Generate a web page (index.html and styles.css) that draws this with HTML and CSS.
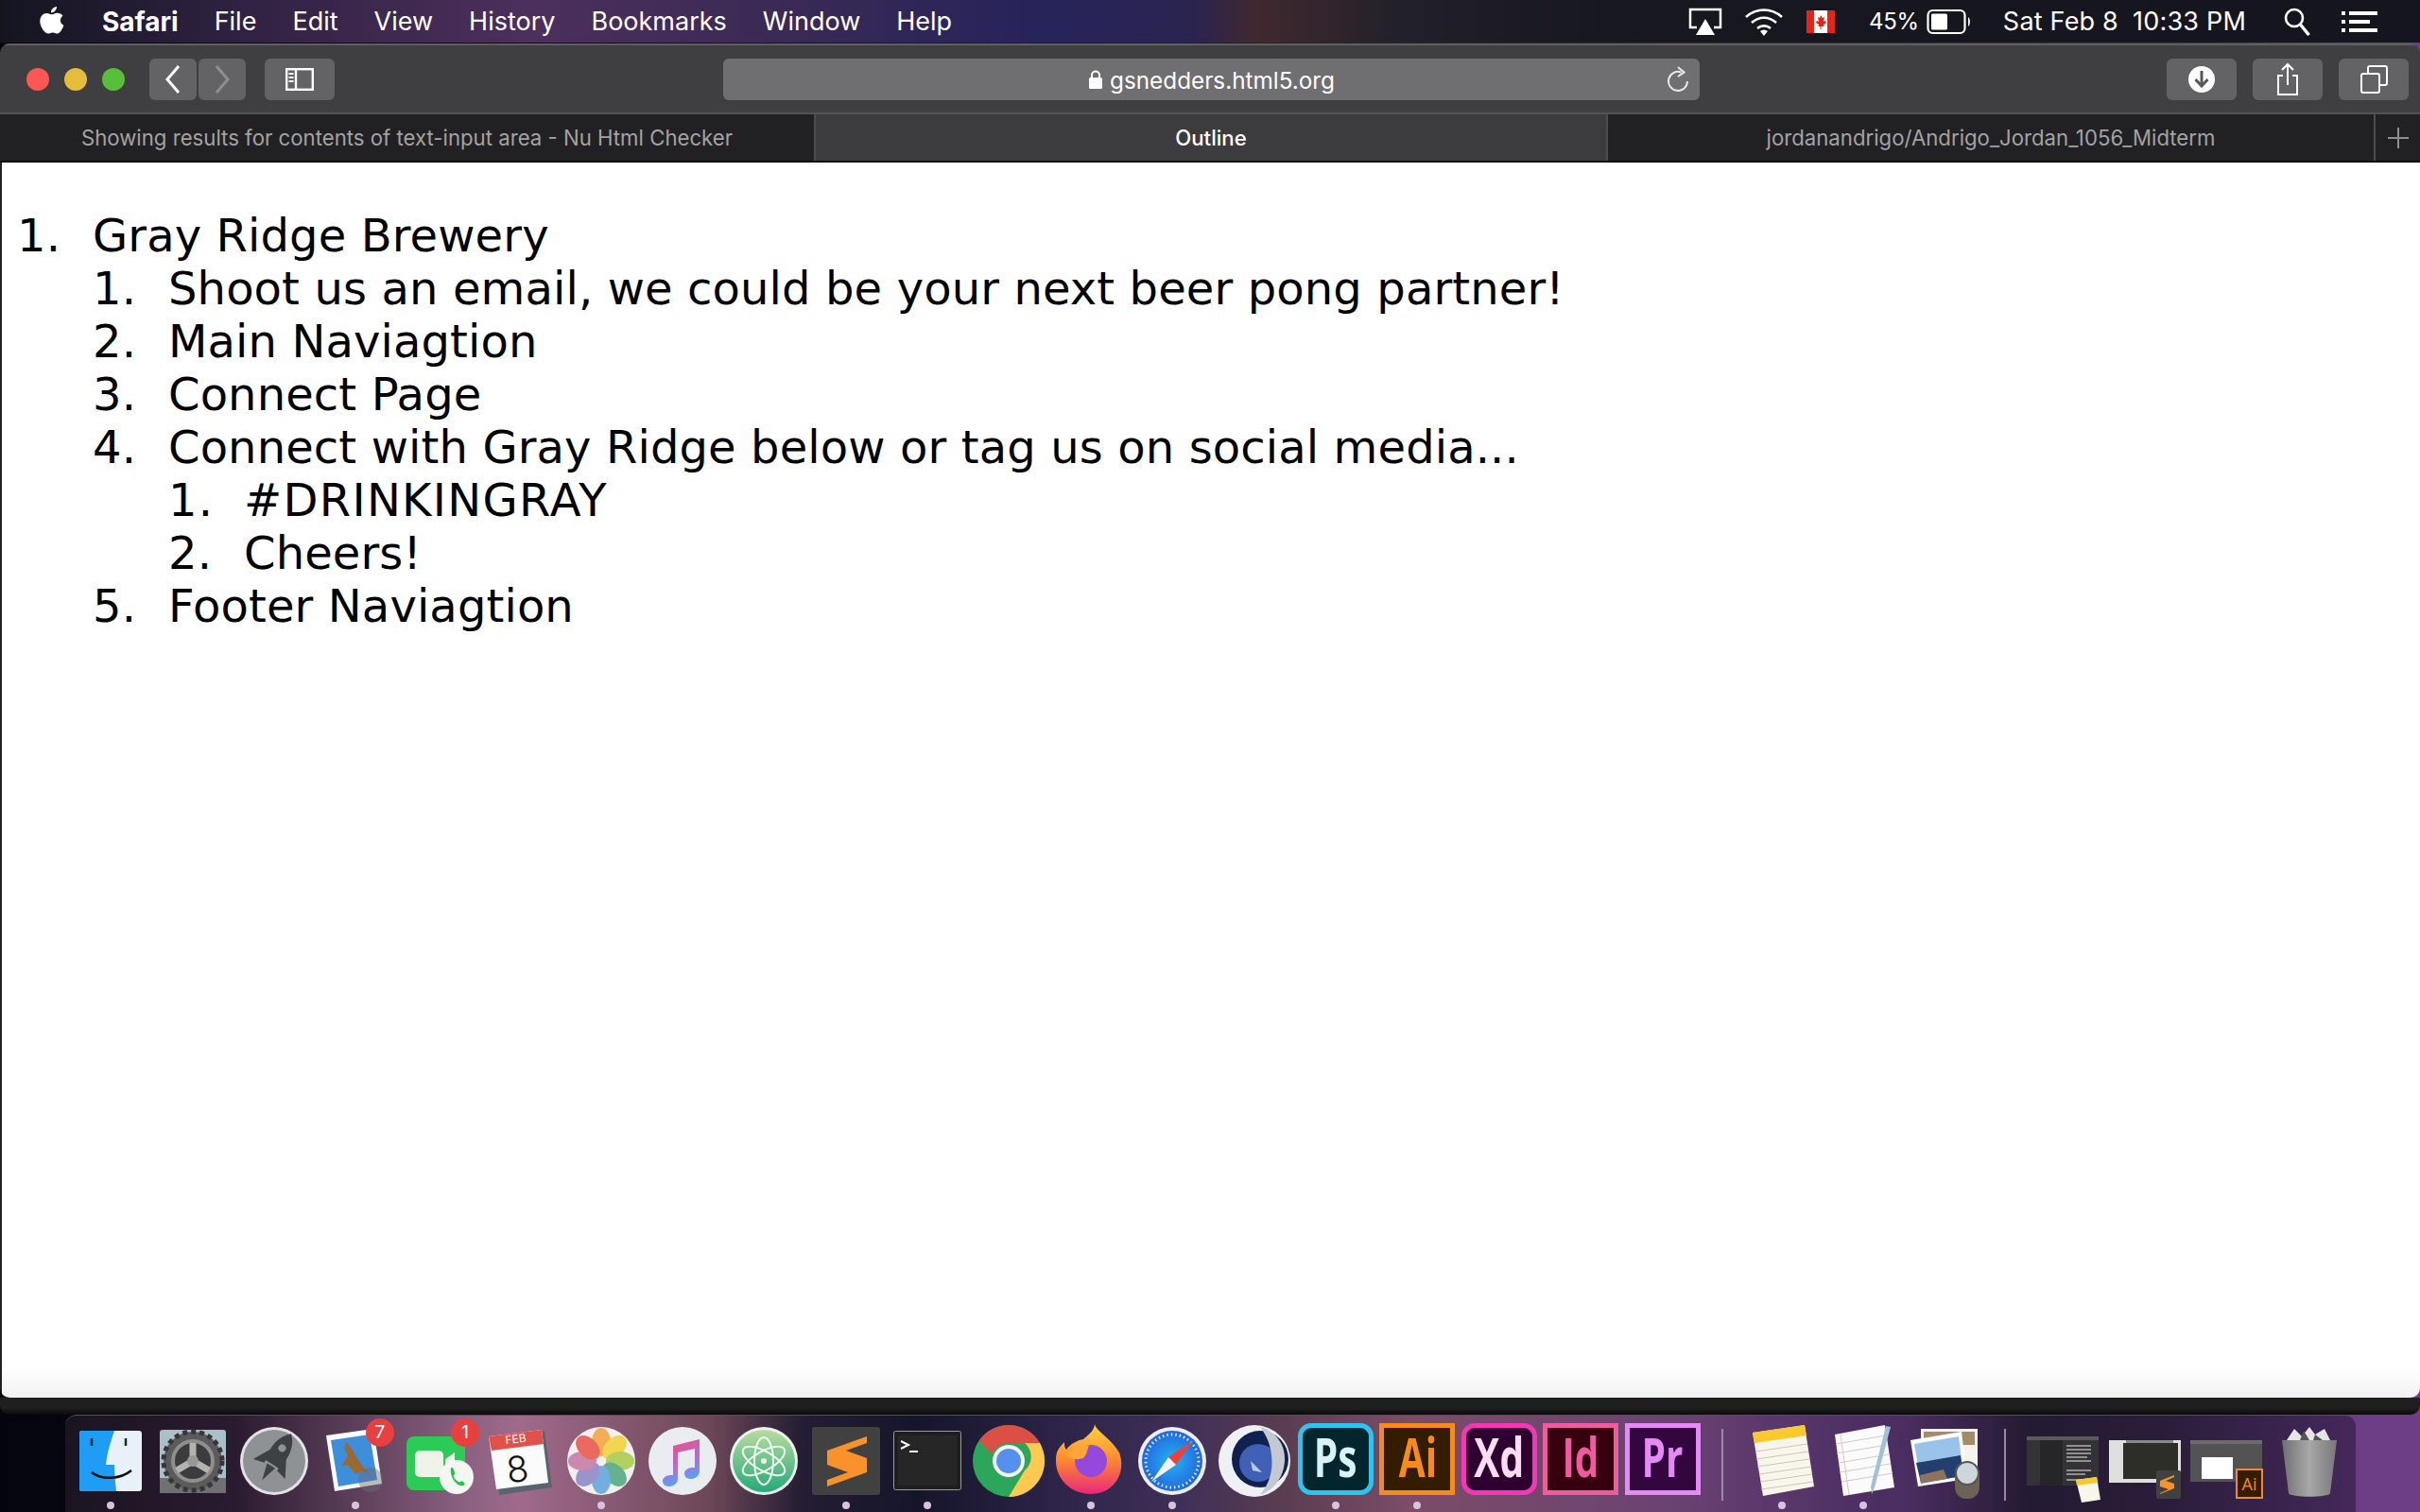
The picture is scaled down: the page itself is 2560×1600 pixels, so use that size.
FILE: index.html
```html
<!DOCTYPE html>
<html lang="en">
<head>
    <meta charset="UTF-8">
    <title>Outline</title>
    <link rel="stylesheet" href="styles.css">
</head>
<body>
    <!-- menu bar -->
    <header class="menubar">
        <svg class="apple" viewBox="0 0 26 32"><path d="M18 0c.3 3-2.600 6.600-6 6.400C11.600 3.300 14.800.3 18 0zM13 8.300c1.400 0 3.400-1.700 6-1.500 1.500.1 4 .7 5.500 3-3.800 2.600-3.300 8 .9 10-1 3-3.700 8.700-6.600 8.800-1.900.1-2.700-1.200-5-1.200s-3.200 1.200-5 1.200C5.500 28.700.3 21.500.3 15.600.3 10 3.900 7 7.300 6.900c2.300 0 4.200 1.400 5.700 1.400z"/></svg>
        <span class="menu-item app-name">Safari</span>
        <span class="menu-item">File</span>
        <span class="menu-item">Edit</span>
        <span class="menu-item">View</span>
        <span class="menu-item">History</span>
        <span class="menu-item">Bookmarks</span>
        <span class="menu-item">Window</span>
        <span class="menu-item">Help</span>
        <div class="status">
            <svg class="st-airplay" width="36" height="30" viewBox="0 0 36 30"><path d="M9 21H2V2h32v19h-7" fill="none" stroke="#fff" stroke-width="2.500"/><path d="M18 12l10 17H8z" fill="#fff"/></svg>
            <svg class="st-wifi" width="42" height="30" viewBox="0 0 42 30" fill="none" stroke="#fff" stroke-width="2.600"><path d="M2 10c11-10 27-10 38 0M8 16c8-7 18-7 26 0M14 22c4-3.500 10-3.500 14 0"/><path d="M21 30l-4-5c2.500-2 5.500-2 8 0z" fill="#fff" stroke="none"/></svg>
            <svg class="st-flag" width="30" height="30" viewBox="0 0 30 30"><rect y="3" width="30" height="24" fill="#fff"/><rect y="3" width="8" height="24" fill="#e1251b"/><rect x="22" y="3" width="8" height="24" fill="#e1251b"/><path d="M15 8l2 3 2-1-1 5 2-1 1 2-3 2 .5 2H15.500v3h-1v-3H12.500l.5-2-3-2 1-2 2 1-1-5 2 1z" fill="#e1251b"/></svg>
            <span class="st-text st-battery-text">45%</span>
            <svg class="st-battery" width="48" height="30" viewBox="0 0 48 30"><rect x="1.500" y="3" width="39" height="24" rx="5" fill="none" stroke="#fff" stroke-width="2.200"/><rect x="5" y="6.500" width="17" height="17" rx="1.500" fill="#fff"/><path d="M44 10c2.500 1 2.500 9 0 10z" fill="#fff"/></svg>
            <span class="st-text st-date">Sat Feb 8</span>
            <span class="st-text st-time">10:33 PM</span>
            <svg class="st-search" width="30" height="30" viewBox="0 0 30 30" fill="none" stroke="#fff"><circle cx="12" cy="11" r="9" stroke-width="2.600"/><path d="M18.500 18l9 11" stroke-width="3.400"/></svg>
            <svg class="st-list" width="38" height="24" viewBox="0 0 38 24" fill="#fff"><rect y="1" width="4" height="4"/><rect x="8" y="1" width="30" height="4"/><rect y="10" width="4" height="4"/><rect x="8" y="10" width="22" height="4"/><rect y="19" width="4" height="4"/><rect x="8" y="19" width="30" height="4"/></svg>
        </div>
    </header>

    <!-- safari window -->
    <main class="window">
        <div class="toolbar">
            <div class="lights">
                <span class="light red"></span>
                <span class="light yellow"></span>
                <span class="light green"></span>
            </div>
            <button class="tbtn nav-btn"><svg width="20" height="32" viewBox="0 0 20 32" fill="none" stroke="#fff" stroke-width="3"><path d="M16 2L4 16l12 14"/></svg></button>
            <button class="tbtn nav-btn next"><svg width="20" height="32" viewBox="0 0 20 32" fill="none" stroke="#8e8d8f" stroke-width="3"><path d="M4 2l12 14L4 30"/></svg></button>
            <button class="tbtn side-btn"><svg width="30" height="24" viewBox="0 0 30 24" fill="none" stroke="#fff" stroke-width="2.400"><rect x="1.200" y="1.200" width="27.600" height="21.600"/><path d="M11 1v22"/><path d="M3.500 6h5M3.500 10h5M3.500 14h5" stroke-width="2"/></svg></button>
            <div class="urlbar">
                <svg class="lock" width="16" height="22" viewBox="0 0 16 22"><path d="M4 10V6.500a4 4 0 0 1 8 0V10" fill="none" stroke="#fff" stroke-width="2"/><rect x="1" y="9" width="14" height="12" rx="1.500" fill="#fff"/></svg>
                <span class="url">gsnedders.html5.org</span>
                <svg class="reload" width="26" height="28" viewBox="0 0 26 28" fill="none" stroke="#e8e8e8" stroke-width="2"><path d="M16.500 6.500A10 10 0 1 0 23 16"/><path d="M13 1l6.500 5.500L13 11" /></svg>
            </div>
            <button class="tbtn tool-btn download"><svg width="30" height="30" viewBox="0 0 30 30"><circle cx="15" cy="15" r="14" fill="#fff"/><path d="M15 6v15M8.500 15l6.500 7 6.500-7" fill="none" stroke="#58575a" stroke-width="3"/></svg></button>
            <button class="tbtn tool-btn"><svg width="26" height="36" viewBox="0 0 26 36" fill="none" stroke="#fff" stroke-width="2"><path d="M8 14H3v20h20V14h-5"/><path d="M13 24V2M7 8l6-6 6 6"/></svg></button>
            <button class="tbtn tool-btn"><svg width="30" height="30" viewBox="0 0 30 30" fill="none" stroke="#fff" stroke-width="2"><rect x="2" y="9" width="19" height="20" rx="2"/><path d="M9 9V3a2 2 0 0 1 2-2h16a2 2 0 0 1 2 2v16a2 2 0 0 1-2 2h-6"/></svg></button>
        </div>
        <nav class="tabs">
            <div class="tab tab-first">Showing results for contents of text-input area - Nu Html Checker</div>
            <div class="tab tab-active">Outline</div>
            <div class="tab tab-last">jordanandrigo/Andrigo_Jordan_1056_Midterm</div>
            <div class="tab tab-new"><svg width="22" height="22" viewBox="0 0 22 22" stroke="#8f8f8f" stroke-width="2"><path d="M11 0v22M0 11h22"/></svg></div>
        </nav>
        <section class="page">
            <ol class="outline">
                <li><span class="num">1.</span>Gray Ridge Brewery
                    <ol class="outline">
                        <li><span class="num">1.</span>Shoot us an email, we could be your next beer pong partner!</li>
                        <li><span class="num">2.</span>Main Naviagtion</li>
                        <li><span class="num">3.</span>Connect Page</li>
                        <li><span class="num">4.</span>Connect with Gray Ridge below or tag us on social media...
                            <ol class="outline">
                                <li class="caps"><span class="num">1.</span>#DRINKINGRAY</li>
                                <li><span class="num">2.</span>Cheers!</li>
                            </ol>
                        </li>
                        <li><span class="num">5.</span>Footer Naviagtion</li>
                    </ol>
                </li>
            </ol>
        </section>
    </main>
    <div class="back-window"></div>

    <!-- dock -->
    <footer class="dock">
        <div class="dock-item running">
            <svg viewBox="0 0 80 80"><rect x="7" y="8" width="66" height="64" rx="3" fill="#e8f0f8"/><path d="M10 8h34c-4 12-8 24-9 36h9c0 10 1 19 2 28H10a3 3 0 0 1-3-3V11a3 3 0 0 1 3-3z" fill="#1f9cf3"/><path d="M20 16v8M56 16v8" stroke="#1a2a3a" stroke-width="2.500"/><path d="M20 52c10 8 30 8 42-2" fill="none" stroke="#111" stroke-width="2.500"/></svg>
        </div>
        <div class="dock-item">
            <svg viewBox="0 0 80 80"><rect x="5" y="7" width="70" height="67" rx="3" fill="#a9c0c9"/><rect x="5" y="58" width="70" height="16" fill="#6f7072"/><circle cx="40" cy="40" r="31" fill="#5b5b5c"/><circle cx="40" cy="40" r="31" fill="none" stroke="#35353a" stroke-width="5" stroke-dasharray="5 4"/><circle cx="40" cy="40" r="21" fill="#3c3c3e" stroke="#8f8f8f" stroke-width="4"/><path d="M40 40V21M40 40L23 50M40 40l17 10" stroke="#b5b3ad" stroke-width="7"/><circle cx="40" cy="40" r="6" fill="#999"/></svg>
        </div>
        <div class="dock-item">
            <svg viewBox="0 0 80 80"><circle cx="40" cy="40" r="36" fill="#e3e3e3"/><circle cx="40" cy="40" r="33" fill="#8f9294"/><g transform="rotate(32 40 40)" fill="#3e4144"><path d="M40 6c9 8 12 20 9 38H31C28 26 31 14 40 6z"/><path d="M31 30L20 50l12-3zM49 30l11 20-12-3z"/><path d="M35 46h10l-5 18z"/><circle cx="40" cy="24" r="4" fill="#8f9294"/></g></svg>
        </div>
        <div class="dock-item running">
            <svg viewBox="0 0 80 80"><path d="M9 13l50-7 9 58-50 8z" fill="#fff"/><path d="M14 18l41-6 8 48-41 7z" fill="#3d8fdc"/><path d="M30 20c6 4 10 16 18 26l8 7-10-2-6 3-8-10-7 2 7-12c-4-6-4-10-2-14z" fill="#9a6a32"/><circle cx="56" cy="60" r="13" fill="#6a6a72" opacity=".45"/><circle cx="66" cy="10" r="15" fill="#e8403f"/><text class="badge-num" x="66" y="16">7</text></svg>
        </div>
        <div class="dock-item">
            <svg viewBox="0 0 80 80"><rect x="7" y="14" width="62" height="57" rx="8" fill="#2bcb55"/><rect x="16" y="29" width="30" height="28" rx="5" fill="#eef3ea"/><path d="M48 38l10-7v25l-10-7z" fill="#eef3ea"/><circle cx="60" cy="57" r="18" fill="#f4f6f2"/><path d="M54 47c2-1 3 2 4 5s-2 3-1 5 3 4 5 5 3-2 5 0 2 3 0 4c-6 2-15-9-13-19z" fill="#2bc14f"/><circle cx="69" cy="10" r="15" fill="#e8403f"/><text class="badge-num" x="69" y="16">1</text></svg>
        </div>
        <div class="dock-item">
            <svg viewBox="0 0 80 80"><path d="M11 16l56-8 8 60-56 8z" fill="#5a6470"/><path d="M8 14l56-7 7 56-55 7z" fill="#fbfbfb"/><path d="M8 14l56-7 2 15-55 7z" fill="#e2504c"/><text class="cal-month" x="37" y="21" transform="rotate(-7 37 21)">FEB</text><text class="cal-day" x="40" y="62" transform="rotate(-7 40 62)">8</text></svg>
        </div>
        <div class="dock-item running">
            <svg viewBox="0 0 80 80"><circle cx="40" cy="40" r="36" fill="#f2f0ee"/><g opacity=".88"><ellipse cx="40" cy="20" rx="10" ry="15" fill="#f4a63c"/><ellipse cx="40" cy="20" rx="10" ry="15" fill="#f2d23b" transform="rotate(45 40 40)"/><ellipse cx="40" cy="20" rx="10" ry="15" fill="#a8cc4c" transform="rotate(90 40 40)"/><ellipse cx="40" cy="20" rx="10" ry="15" fill="#53a982" transform="rotate(135 40 40)"/><ellipse cx="40" cy="20" rx="10" ry="15" fill="#63a6dc" transform="rotate(180 40 40)"/><ellipse cx="40" cy="20" rx="10" ry="15" fill="#8d88c8" transform="rotate(225 40 40)"/><ellipse cx="40" cy="20" rx="10" ry="15" fill="#c97aa8" transform="rotate(270 40 40)"/><ellipse cx="40" cy="20" rx="10" ry="15" fill="#e9574d" transform="rotate(315 40 40)"/></g></svg>
        </div>
        <div class="dock-item">
            <svg viewBox="0 0 80 80"><defs><linearGradient id="note" x1="0" y1="0" x2=".3" y2="1"><stop offset="0" stop-color="#ef4f6b"/><stop offset=".6" stop-color="#b968d8"/><stop offset="1" stop-color="#50a6f2"/></linearGradient></defs><circle cx="40" cy="40" r="36" fill="#e9ecf1"/><path d="M30 24l28-7v34c0 4-4 8-9 8s-7-3-7-6 4-6 8-6h3V27l-18 4v28c0 4-4 8-9 8s-7-3-7-6 4-6 8-6h3z" fill="url(#note)"/></svg>
        </div>
        <div class="dock-item">
            <svg viewBox="0 0 80 80"><defs><linearGradient id="atom" x1="0" y1="0" x2="0" y2="1"><stop offset="0" stop-color="#b7dc9f"/><stop offset="1" stop-color="#27a97a"/></linearGradient></defs><circle cx="40" cy="40" r="36" fill="#eef2ee"/><circle cx="40" cy="40" r="33" fill="url(#atom)"/><g fill="none" stroke="#eef8ee" stroke-width="2"><ellipse cx="40" cy="40" rx="10" ry="25"/><ellipse cx="40" cy="40" rx="10" ry="25" transform="rotate(60 40 40)"/><ellipse cx="40" cy="40" rx="10" ry="25" transform="rotate(-60 40 40)"/></g><circle cx="40" cy="40" r="3" fill="#eef8ee"/></svg>
        </div>
        <div class="dock-item running">
            <svg viewBox="0 0 80 80"><rect x="4" y="4" width="72" height="72" rx="3" fill="#414141"/><path d="M62 14L20 29v15l22 8-22 8v7l42-15V37L40 29l22-8z" fill="#f9922a"/></svg>
        </div>
        <div class="dock-item running">
            <svg viewBox="0 0 80 80"><rect x="4.500" y="8.500" width="71" height="62" rx="2" fill="#1e1e1e" stroke="#9a9a9f"/><rect x="9" y="13" width="62" height="53" fill="#262626"/><path d="M12 19l8 4-8 4" fill="none" stroke="#fff" stroke-width="2"/><path d="M21 30h9" stroke="#fff" stroke-width="2"/></svg>
        </div>
        <div class="dock-item">
            <svg viewBox="0 0 80 80"><circle cx="40" cy="40" r="38" fill="#2ba65a"/><path d="M40 2a38 38 0 0 1 33 19H40a19 19 0 0 0-18 12L9 18A38 38 0 0 1 40 2z" fill="#db4f45"/><path d="M73 21a38 38 0 0 1-33 57l17-28a19 19 0 0 0 0-29z" fill="#fdc94e"/><circle cx="40" cy="40" r="17" fill="#f4f4f4"/><circle cx="40" cy="40" r="13" fill="#5690ee"/></svg>
        </div>
        <div class="dock-item running">
            <svg viewBox="0 0 80 80"><defs><linearGradient id="fox" x1="0" y1="0" x2="0" y2="1"><stop offset="0" stop-color="#ffd53f"/><stop offset=".5" stop-color="#ff8a2f"/><stop offset="1" stop-color="#e8277c"/></linearGradient></defs><path d="M44 1c2 8 16 14 26 30 8 22-6 44-30 44C18 75 2 58 3 38c0-8 3-12 9-18 0 3 0 6 2 8 4-6 12-10 18-11 6-5 12-10 12-16z" fill="url(#fox)"/><circle cx="40" cy="40" r="17" fill="#9548dc"/><path d="M14 33c6-8 16-8 24-10-2 6-2 10-6 14-6 2-12 2-18-4z" fill="#ffa436"/></svg>
        </div>
        <div class="dock-item running">
            <svg viewBox="0 0 80 80"><defs><radialGradient id="saf"><stop offset="0" stop-color="#22b5f4"/><stop offset="1" stop-color="#2467dc"/></radialGradient></defs><circle cx="40" cy="40" r="36" fill="#eee"/><circle cx="40" cy="40" r="32" fill="url(#saf)"/><circle cx="40" cy="40" r="28" fill="none" stroke="#d6ecfa" stroke-width="3" stroke-dasharray="1.500 3"/><path d="M62 18L44 44 36 36z" fill="#ee3f3a"/><path d="M18 62l18-26 8 8z" fill="#f2f2f2"/></svg>
        </div>
        <div class="dock-item">
            <svg viewBox="0 0 80 80"><circle cx="40" cy="40" r="38" fill="#eef0f4"/><circle cx="46" cy="38" r="30" fill="#10214f"/><circle cx="44" cy="42" r="20" fill="#3f60b4"/><path d="M46 4c16 4 27 18 26 36-1 18-12 31-26 36 10-12 14-26 12-42-1-12-6-22-12-30z" fill="#c4c8d0"/><path d="M36 40l12 12-10-2z" fill="#b9cbed"/></svg>
        </div>
        <div class="dock-item running">
            <div class="adobe round ps"><span>Ps</span></div>
        </div>
        <div class="dock-item running">
            <div class="adobe ai"><span>Ai</span></div>
        </div>
        <div class="dock-item">
            <div class="adobe round xd"><span>Xd</span></div>
        </div>
        <div class="dock-item">
            <div class="adobe id"><span>Id</span></div>
        </div>
        <div class="dock-item">
            <div class="adobe pr"><span>Pr</span></div>
        </div>
        <div class="dock-sep"></div>
        <div class="dock-item running">
            <svg viewBox="0 0 80 80"><path d="M9 10l55-8 10 65-54 10z" fill="#f8f5ea"/><path d="M9 10l55-8 2 11-55 8z" fill="#fbc92c"/><path d="M12 30l55-8M13 38l55-8M14 46l55-8M16 54l55-8M17 62l55-8M18 70l55-8" stroke="#c9c6bd"/></svg>
        </div>
        <div class="dock-item running">
            <svg viewBox="0 0 80 80"><path d="M10 12L63 2l10 66-54 9z" fill="#fbfbfb"/><path d="M11 22l53-9M12 32l53-9M14 42l53-9M15 52l54-9M17 62l54-9" stroke="#ccc"/><path d="M16 12l9 64" stroke="#edbfbf"/><path d="M64 3l5 1-17 64-3 7-1-8z" fill="#a2c0d8"/></svg>
        </div>
        <div class="dock-item">
            <svg viewBox="0 0 80 80"><rect x="14" y="6" width="60" height="50" fill="#f5f3ee"/><rect x="17" y="9" width="54" height="14" fill="#a58b6a"/><path d="M3 18l54-9 6 50-52 8z" fill="#fff"/><path d="M7 22l47-8 5 42-45 7z" fill="#9ac3ea"/><path d="M9 42l47-8 3 22-45 7z" fill="#223f6f"/><path d="M13 55l25-6 4 10-28 5z" fill="#8d735c"/><rect x="50" y="42" width="26" height="38" rx="12" fill="#6c6255"/><ellipse cx="63" cy="53" rx="12" ry="12" fill="#ced6dc" stroke="#555" stroke-width="2"/></svg>
        </div>
        <div class="dock-sep"></div>
        <div class="dock-item">
            <svg viewBox="0 0 80 80"><rect y="14" width="76" height="52" fill="#333235"/><rect y="14" width="76" height="4" fill="#5a595b"/><rect x="14" y="18" width="24" height="48" fill="#262628"/><path d="M42 24h26M42 28h26M42 32h26M42 36h22M42 40h26M42 50h26M42 54h20M42 60h26" stroke="#b0b0b0" stroke-width="1.500"/><path d="M52 60l22-3 4 24-20 3z" fill="#f8f5ea"/><path d="M52 60l22-3 1 6-22 3z" fill="#fbc92c"/></svg>
        </div>
        <div class="dock-item">
            <svg viewBox="0 0 80 80"><rect y="18" width="76" height="45" fill="#dfdfdf"/><rect x="15" y="21" width="58" height="38" fill="#2d2e28"/><rect x="18" y="18" width="50" height="3" fill="#888"/><rect x="50" y="50" width="26" height="30" rx="2" fill="#414141"/><path d="M69 55l-15 6v6l9 3-9 4v1l15-6v-5l-9-3 9-4z" fill="#f9922a"/></svg>
        </div>
        <div class="dock-item">
            <svg viewBox="0 0 80 80"><rect y="18" width="76" height="44" fill="#535353"/><rect y="18" width="76" height="4" fill="#6c6c6c"/><rect x="12" y="36" width="33" height="23" fill="#fff"/><rect x="48" y="48" width="29" height="32" fill="#f48b1b"/><rect x="50" y="50" width="25" height="28" fill="#331c00"/><text class="mini-ai" x="62.500" y="71">Ai</text></svg>
        </div>
        <div class="dock-item">
            <svg viewBox="0 0 80 80"><defs><linearGradient id="can" x1="0" y1="0" x2="1" y2="0"><stop offset="0" stop-color="#707072"/><stop offset=".5" stop-color="#a8a8a8"/><stop offset="1" stop-color="#77777a"/></linearGradient></defs><path d="M11 18h58l-7 56c-1 5-43 5-44 0z" fill="url(#can)"/><path d="M16 18l8-12 8 8 8-10 6 8 10-6 6 12z" fill="#e7e5e3"/><path d="M34 8l6 10-10 0zM46 12l8 6H44z" fill="#555"/></svg>
        </div>
    </footer>
</body>
</html>
```

FILE: styles.css
```css
* {
    box-sizing: border-box;
}
html, body {
    margin: 0;
    padding: 0;
}
body {
    width: 2560px;
    height: 1600px;
    overflow: hidden;
    display: flex;
    flex-direction: column;
    background: linear-gradient(90deg, #03040e 0, #05050f 60px, #2a1a3a 1300px, #4a2d60 2300px, #6d3d85 2500px);
    font-family: Inter, "Liberation Sans", sans-serif;
}

/* menu bar */
.menubar {
    height: 45px;
    flex: none;
    display: flex;
    align-items: center;
    padding-left: 42px;
    gap: 38px;
    color: #fff;
    background: linear-gradient(90deg, #14141f 0, #2e2140 240px, #4c2f5c 560px, #3a2a55 820px, #26235a 1100px, #2a2350 1260px, #40292f 1330px, #22202a 1480px, #17171f 1700px, #15151f 2560px);
}
.apple {
    width: 26px;
    height: 32px;
    fill: #fff;
    margin-right: 2px;
}
.menu-item {
    font-size: 27px;
}
.app-name {
    font-size: 28px;
    font-weight: 700;
}
.status {
    margin-left: auto;
    display: flex;
    align-items: center;
    padding-right: 45px;
}
.st-text {
    font-size: 27px;
    letter-spacing: .2px;
}
.st-wifi { margin-left: 23px; }
.st-flag { margin-left: 24px; }
.st-battery-text {
    margin-left: 36px;
    font-size: 24px;
    letter-spacing: -.3px;
}
.st-battery { margin-left: 8px; }
.st-date { margin-left: 33px; }
.st-time { margin-left: 15px; }
.st-search { margin-left: 39px; }
.st-list { margin-left: 32px; }

/* window */
.window {
    height: 1433px;
    flex: none;
    margin-top: 1px;
    display: flex;
    flex-direction: column;
    border-radius: 10px;
    overflow: hidden;
}
.toolbar {
    height: 75px;
    flex: none;
    display: flex;
    align-items: flex-start;
    padding: 14px 12px 0 28px;
    background: #3f3e41;
    border-top: 2px solid #605f62;
    border-bottom: 2px solid #525154;
}
.lights {
    display: flex;
    flex: none;
    gap: 16px;
    margin-top: 10px;
}
.light {
    width: 24px;
    height: 24px;
    border-radius: 50%;
}
.red { background: #fc5753; }
.yellow { background: #e4bd3a; }
.green { background: #57c038; }
.tbtn {
    height: 44px;
    flex: none;
    padding: 0;
    border: none;
    border-radius: 6px;
    background: #636265;
    display: flex;
    align-items: center;
    justify-content: center;
}
.nav-btn {
    width: 50px;
    margin-left: 26px;
}
.next {
    margin-left: 2px;
}
.side-btn {
    width: 74px;
    margin-left: 20px;
}
.urlbar {
    width: 1033px;
    height: 44px;
    flex: none;
    margin-left: 411px;
    margin-right: 494px;
    border-radius: 6px;
    background: #6f6e71;
    color: #fff;
    font-size: 24.3px;
    display: flex;
    align-items: center;
    justify-content: center;
    position: relative;
}
.lock {
    margin-right: 7px;
}
.url {
    margin-top: 1px;
}
.reload {
    position: absolute;
    right: 10px;
    top: 8px;
}
.tool-btn {
    width: 74px;
    margin-right: 17px;
}
.tool-btn:last-child {
    margin-right: 0;
}
.tabs {
    height: 51px;
    flex: none;
    display: flex;
    font-size: 22.2px;
    color: #a3a3a3;
    background: #212022;
    border-bottom: 2px solid #0c0c0c;
}
.tab {
    display: flex;
    align-items: center;
    justify-content: center;
    border-right: 2px solid #4c4b4e;
}
.tab-first { width: 863px; }
.tab-active {
    width: 838px;
    background: #3c3b3e;
    color: #fff;
    font-weight: 500;
}
.tab-last { width: 812px; }
.tab-new {
    width: 47px;
    border-right: none;
}

/* page */
.page {
    flex: 1;
    background: linear-gradient(180deg, #fff 0, #fff 97.500%, #f2f2f2 100%);
    border-left: 2px solid #222;
    color: #000;
    font-family: "DejaVu Sans", Verdana, sans-serif;
    font-size: 48px;
    letter-spacing: .12px;
    line-height: 56px;
    padding: 49px 0 0 16px;
}
.outline {
    list-style: none;
    margin: 0;
    padding: 0;
}
.outline .outline {
    padding-left: 80px;
}
.num {
    display: inline-block;
    width: 80px;
}
.caps {
    letter-spacing: 1.3px;
}
.back-window {
    height: 18px;
    flex: none;
    background: linear-gradient(180deg, #1f1f1f 0, #1f1f1f 60%, #0a0a0a 100%);
    border-radius: 0 0 10px 10px;
}

/* dock */
.dock {
    flex: 1;
    margin-left: 69px;
    width: 2423px;
    padding-left: 5px;
    display: flex;
    border-radius: 12px 12px 0 0;
    border-top: 1px solid #5a4a68;
    background: linear-gradient(90deg, #1a1420 0, #2a1b30 180px, #8a6080 420px, #a06a8c 480px, #6d4858 680px, #241d33 780px, #15152a 900px, #2d2448 1050px, #3f2f58 1180px, #5a3d50 1290px, #7c4c68 1420px, #6a4272 1700px, #4d2f64 1900px, #4a2d60 1950px, #241a32 2080px, #2a1d3a 2220px, #44285a 2423px);
}
.dock-item {
    width: 86.4px;
    flex: none;
    position: relative;
}
.dock-item svg,
.adobe {
    display: block;
    width: 80px;
    height: 80px;
    margin: 8px auto 0;
    overflow: visible;
}
.running::after {
    content: "";
    position: absolute;
    left: 50%;
    top: 91px;
    width: 8px;
    height: 8px;
    margin-left: -4px;
    border-radius: 50%;
    background: #d9c2dc;
}
.dock-sep {
    width: 2px;
    height: 76px;
    flex: none;
    margin: 14px 19px 0;
    background: #9c86ab;
}
.badge-num {
    fill: #fff;
    font-family: Inter, sans-serif;
    font-size: 19px;
    text-anchor: middle;
}
.cal-month {
    fill: #fff;
    font-family: Inter, sans-serif;
    font-size: 12px;
    text-anchor: middle;
}
.cal-day {
    fill: #111;
    font-family: Inter, sans-serif;
    font-size: 38px;
    font-weight: 300;
    text-anchor: middle;
}
.mini-ai {
    fill: #f48b1b;
    font-family: "Open Sans", sans-serif;
    font-size: 18px;
    text-anchor: middle;
}

/* adobe tiles */
.adobe {
    height: 76px;
    margin-top: 8px;
    border: 5px solid;
    display: flex;
    align-items: center;
    justify-content: center;
    font-family: "Open Sans", sans-serif;
    font-size: 58px;
    font-weight: 700;
    line-height: 60px;
}
.adobe span {
    display: inline-block;
    transform: scaleX(.7);
    margin-top: -6px;
}
.round {
    border-radius: 14px;
}
.ps { border-color: #2dc4f0; background: #03262e; color: #d8f3f8; }
.ai { border-color: #f48b1b; background: #331c00; color: #f48b1b; }
.xd { border-color: #f238b5; background: #2d0030; color: #fbdcf3; }
.id { border-color: #ee5b9f; background: #36000f; color: #ee5b9f; }
.pr { border-color: #e48af5; background: #330640; color: #e48af5; }
```
